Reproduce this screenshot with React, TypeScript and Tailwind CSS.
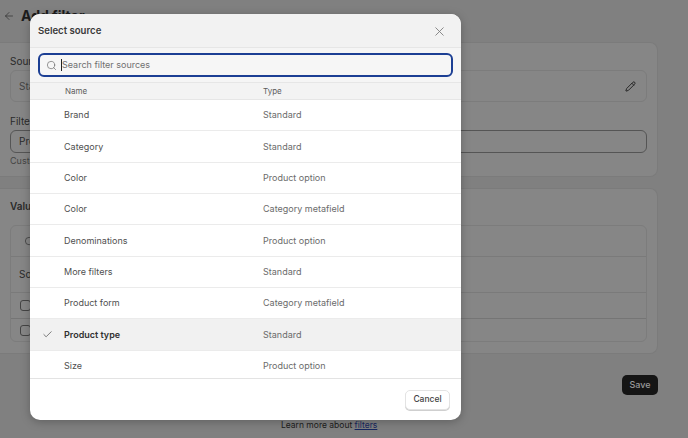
import { ArrowLeft, Check, Pencil, Search, X } from 'lucide-react';

const SOURCES = [
  { name: 'Brand', type: 'Standard' },
  { name: 'Category', type: 'Standard' },
  { name: 'Color', type: 'Product option' },
  { name: 'Color', type: 'Category metafield' },
  { name: 'Denominations', type: 'Product option' },
  { name: 'More filters', type: 'Standard' },
  { name: 'Product form', type: 'Category metafield' },
  { name: 'Product type', type: 'Standard', selected: true },
  { name: 'Size', type: 'Product option' },
];

function Page() {
  return (
    <div className="flex h-[438px] flex-col bg-[#808080] pr-[30px] text-[10px] text-[#2a2a2a]">
      <div className="flex h-[42px] items-start gap-[4px] pl-[3px] pt-[6px]">
        <ArrowLeft className="mt-[4px] h-[12px] w-[12px] text-[#333333]" strokeWidth={1.5} />
        <span className="ml-[2px] text-[14px] leading-[20px] font-bold text-[#1c1c1c]">Add filter</span>
      </div>

      <section className="flex h-[135px] flex-col rounded-r-[8px] border border-l-0 border-[#7b7b7b] bg-[#868686] pl-[10px] pr-[10px]">
        <div className="mt-[11px] leading-[14px]">Source</div>
        <div className="mt-[2px] flex h-[32px] items-center justify-between rounded-[6px] border border-[#7c7c7c] pl-[8px] pr-[10px]">
          <span className="text-[#444444]">Standard</span>
          <Pencil className="h-[11px] w-[11px] text-[#1f1f1f]" strokeWidth={2} />
        </div>
        <div className="mt-[12px] leading-[14px]">Filter label</div>
        <div className="mt-[2px] flex h-[23px] items-center rounded-[6px] border border-[#555555] px-[8px]">
          Product type
        </div>
        <div className="mt-[2px] text-[9px] leading-[12px] text-[#444444]">Customers see this label</div>
      </section>

      <section className="mt-[11px] flex h-[166px] flex-col rounded-r-[8px] border border-l-0 border-[#7b7b7b] bg-[#868686] pl-[10px] pr-[10px]">
        <div className="mt-[10px] leading-[14px] font-semibold">Values</div>
        <div className="mt-[12px] flex h-[117px] flex-col rounded-[6px] border border-[#7c7c7c]">
          <div className="flex h-[31px] items-center border-b border-[#7a7a7a] pl-[13px]">
            <Search className="h-[11px] w-[11px] text-[#333333]" strokeWidth={1.5} />
          </div>
          <div className="flex h-[36px] items-center border-b border-[#7a7a7a] px-[8px]">Sort</div>
          <div className="flex h-[26px] items-center border-b border-[#757575] px-[9px]">
            <div className="h-[11px] w-[11px] rounded-[3px] border border-[#444444]" />
          </div>
          <div className="flex flex-1 items-center px-[9px]">
            <div className="h-[11px] w-[11px] rounded-[3px] border border-[#444444]" />
          </div>
        </div>
      </section>

      <div className="mt-[21px] flex justify-end">
        <button className="h-[20px] w-[36px] rounded-[5px] bg-[#151515] text-[9px] font-medium text-[#9a9a9a]">
          Save
        </button>
      </div>

      <div className="mt-[23px] pl-[281px] text-[8.5px] leading-[14px] text-[#1c1c1c]">
        Learn more about <span className="text-[#17275f] underline">filters</span>
      </div>
    </div>
  );
}

function SelectSource() {
  return (
    <div className="absolute left-[30px] top-[14px] flex h-[406px] w-[431px] flex-col overflow-hidden rounded-[10px] bg-white text-[9px] shadow-[0_2px_10px_rgba(0,0,0,0.25)]">
      <div className="flex h-[34px] shrink-0 items-center justify-between border-b border-[#e6e6e6] bg-[#f2f2f2] pl-[8px] pr-[14px]">
        <span className="pt-[2px] text-[9.6px] font-semibold text-[#3a3a3a]">Select source</span>
        <X className="mt-[2px] h-[15px] w-[15px] text-[#7c7c7c]" strokeWidth={1.4} />
      </div>

      <div className="flex h-[35px] shrink-0 items-center border-b border-[#e6e6e6] bg-[#f5f5f5] px-[8px]">
        <div className="flex h-[24px] w-full items-center rounded-[6px] border-2 border-[#1c3f94] bg-[#f6f6f6] pl-[6px]">
          <Search className="h-[11px] w-[11px] text-[#6b6b6b]" strokeWidth={1.5} />
          <span className="ml-[4px] h-[12px] w-px bg-[#222222]" />
          <span className="text-[9px] text-[#707070]">Search filter sources</span>
        </div>
      </div>

      <div className="grid h-[17px] shrink-0 grid-cols-[232px_1fr] items-center border-b border-[#e6e6e6] bg-[#f3f3f3] text-[8px] text-[#5c5c5c]">
        <span className="pl-[35px]">Name</span>
        <span className="pl-[1px]">Type</span>
      </div>

      <div className="min-h-0 flex-1 overflow-hidden">
        {SOURCES.map((s, i) => (
          <div
            key={i}
            className={`grid h-[31.35px] grid-cols-[34px_199px_1fr] items-center border-b border-[#ebebeb] ${s.selected ? 'bg-[#f1f1f1]' : ''}`}
          >
            <span className="flex justify-center pl-[1px]">
              {s.selected && <Check className="h-[11px] w-[11px] text-[#444444]" strokeWidth={1.5} />}
            </span>
            <span className={s.selected ? 'font-semibold text-[#303030]' : 'text-[#4f4f4f]'}>{s.name}</span>
            <span className="text-[#6b6b6b]">{s.type}</span>
          </div>
        ))}
      </div>

      <div className="flex h-[42px] shrink-0 items-center justify-end border-t border-[#e3e3e3] pr-[11px]">
        <button className="h-[20px] w-[45px] rounded-[5px] border border-[#e3e3e3] bg-white text-[8.5px] font-medium text-[#444444] shadow-[0_1px_0_#cfcfcf]">
          Cancel
        </button>
      </div>
    </div>
  );
}

export default function App() {
  return (
    <div className="relative h-[438px] w-[688px] overflow-hidden font-['Inter',sans-serif]">
      <Page />
      <SelectSource />
    </div>
  );
}
